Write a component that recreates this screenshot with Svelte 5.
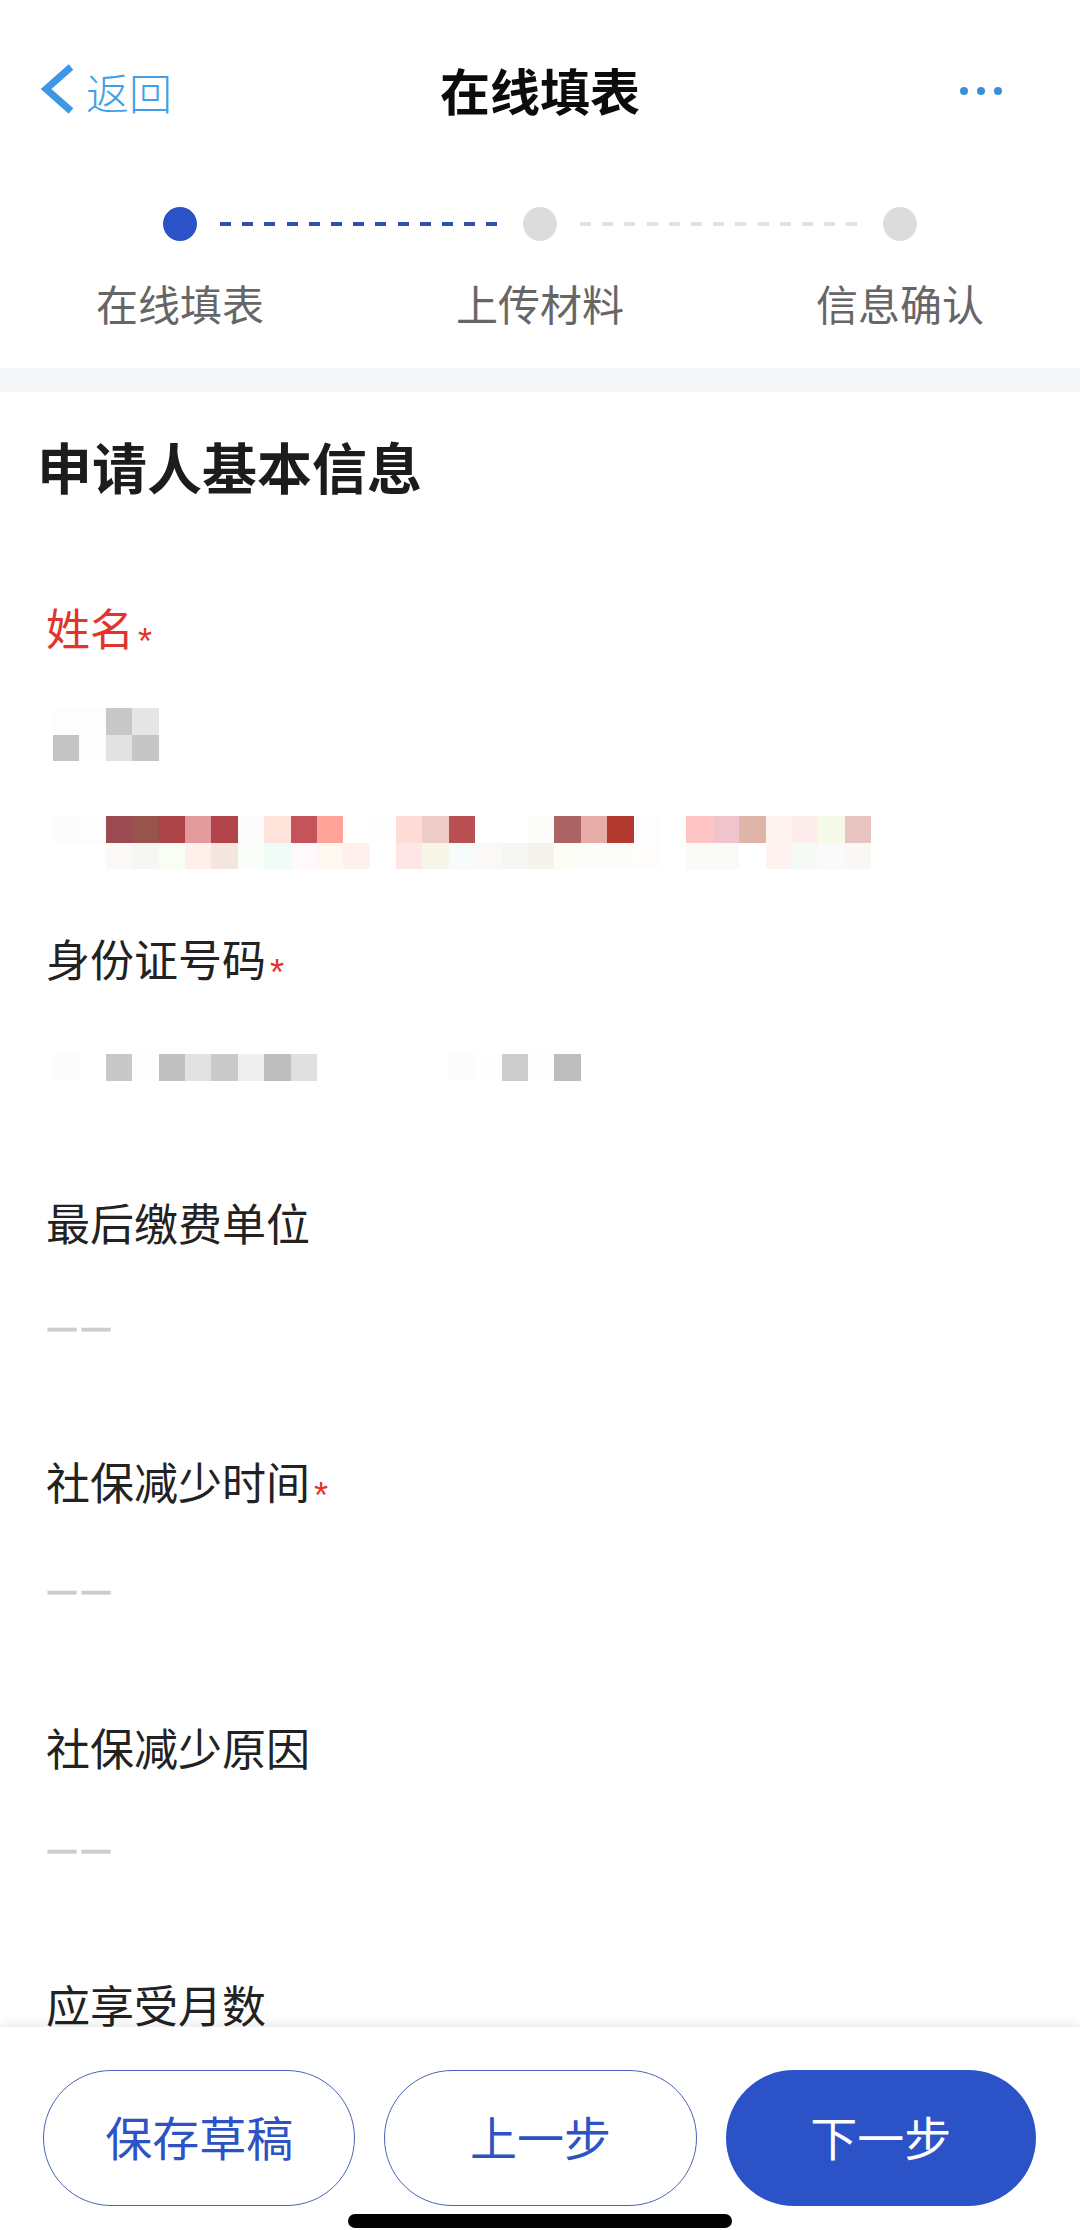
<script>
  const steps = [
    { label: "在线填表", active: true },
    { label: "上传材料", active: false },
    { label: "信息确认", active: false },
  ];

  const W = "#fff";
  const nameCells = [
    "#fdfdfd", "#fdfdfd", "#c8c8c8", "#e6e6e6",
    "#c4c4c4", "#fdfdfd", "#e2e2e2", "#c6c6c6",
  ];
  const addressCells = [
    "#fbfcfb", "#fdfdfd", "#9c4a52", "#98544c", "#ac4347", "#e29a9d", "#b24348", "#fbfbfb",
    "#ffe4dc", "#c4535a", "#ffa298", W, "#fdfefd", "#ffdcd8", "#eeccc8", "#b95054",
    W, W, "#fcfdfb", "#ab6363", "#e6aca8", "#b43a30", "#fcfdfc", W,
    "#ffc4c4", "#f0c4cc", "#e0b4a8", "#fff4f0", "#fcecec", "#f6fae8", "#e8c4c0",
    W, W, "#fcf8f6", "#f6f6f2", "#fafcf6", "#fff0ec", "#f4e6de", "#fafdf8",
    "#f0fcf8", "#fff8fc", "#fff8f0", "#fff2ee", W, "#ffe6e6", "#f8f6e8", "#f6fcfa",
    "#faf9f5", "#f6f6f4", "#f6f2ee", "#fdfdf8", "#fcfcf8", "#fcfcfa", "#fefdfc", W,
    "#fafbf6", "#fafbf6", W, "#fff2f0", "#f6faf4", "#fafafa", "#faf8f4",
  ];
  const idCells = [
    "#fcfcfc", W, "#c8c8c8", "#fdfdfd", "#c0c0c0", "#e2e2e2", "#cacaca", "#efefef",
    "#bebebe", "#e0e0e0", W, W, W, W, W, "#fcfcfc", "#fefefe", "#cccccc", "#fdfdfd", "#bebebe",
  ];

  const emptyFields = [
    { label: "最后缴费单位", required: false, height: 259, dashTop: 56 },
    { label: "社保减少时间", required: true, height: 266, dashTop: 60 },
    { label: "社保减少原因", required: false, height: 257, dashTop: 53 },
  ];
</script>

<div class="page">
  <div class="scroll">
    <header class="nav">
      <div class="back">
        <svg class="chevron" width="36" height="50" viewBox="0 0 36 50">
          <polyline points="33,3 8,25 33,47" fill="none" stroke="#3c97e6" stroke-width="7" />
        </svg>
        <span>返回</span>
      </div>
      <h1>在线填表</h1>
      <div class="more"><i></i><i></i><i></i></div>
    </header>

    <section class="steps">
      <div class="track">
        <span class="dot on"></span>
        <span class="line on"></span>
        <span class="dot"></span>
        <span class="line"></span>
        <span class="dot"></span>
      </div>
      <div class="labels">
        {#each steps as step}
          <span>{step.label}</span>
        {/each}
      </div>
    </section>

    <div class="band"></div>

    <main class="form">
      <h2>申请人基本信息</h2>

      <div class="field first">
        <div class="label error">姓名<em>*</em></div>
        <div class="mosaic name">
          {#each nameCells as c}<b style="background:{c}"></b>{/each}
        </div>
        <div class="mosaic address">
          {#each addressCells as c}<b style="background:{c}"></b>{/each}
        </div>
      </div>

      <div class="field idno">
        <div class="label">身份证号码<em>*</em></div>
        <div class="mosaic id">
          {#each idCells as c}<b style="background:{c}"></b>{/each}
        </div>
      </div>

      {#each emptyFields as f}
        <div class="field" style="height:{f.height}px">
          <div class="label">{f.label}{#if f.required}<em>*</em>{/if}</div>
          <div class="empty" style="margin-top:{f.dashTop}px">——</div>
        </div>
      {/each}

      <div class="field">
        <div class="label">应享受月数</div>
      </div>
    </main>
  </div>

  <footer class="bar">
    <button class="ghost">保存草稿</button>
    <button class="ghost">上一步</button>
    <button class="primary">下一步</button>
    <span class="home"></span>
  </footer>
</div>

<style>
  :global(body) {
    margin: 0;
    background: #fff;
    color: #1c1c1c;
    font-family: "Noto Sans CJK SC", "Noto Sans", sans-serif;
  }

  .page {
    display: flex;
    flex-direction: column;
    width: 1080px;
    height: 2230px;
    overflow: hidden;
  }

  .scroll {
    flex: 1;
    min-height: 0;
    overflow: hidden;
  }

  .nav {
    display: grid;
    grid-template-columns: 1fr auto 1fr;
    align-items: center;
    height: 184px;
    padding: 0 38px 6px;
    box-sizing: border-box;
  }

  .back {
    display: flex;
    align-items: center;
    gap: 12px;
    color: #449ee8;
    font-size: 43px;
    line-height: 50px;
    font-weight: 300;
  }

  .back span {
    margin-top: 3px;
  }

  .chevron {
    display: block;
  }

  h1 {
    margin: 0;
    color: #0c0c0c;
    font-size: 50px;
    line-height: 60px;
    font-weight: 700;
  }

  .more {
    display: flex;
    justify-content: flex-end;
    gap: 9px;
    margin: 4px 40px 0 0;
  }

  .more i {
    width: 8px;
    height: 8px;
    border-radius: 50%;
    background: #3a8fdc;
  }

  .steps {
    height: 184px;
  }

  .track {
    display: flex;
    align-items: center;
    gap: 23px;
    padding: 23px 0 0 163px;
  }

  .dot {
    flex: none;
    width: 34px;
    height: 34px;
    border-radius: 50%;
    background: #dcdcdc;
  }

  .dot.on {
    background: #2c52c8;
  }

  .line {
    flex: none;
    width: 280px;
    height: 4px;
    background: repeating-linear-gradient(90deg, #e2e2e2 0 11px, transparent 11px 22.2px);
  }

  .line.on {
    background: repeating-linear-gradient(90deg, #2f50b0 0 11px, transparent 11px 22.2px);
  }

  .labels {
    display: grid;
    grid-template-columns: repeat(3, 360px);
    margin-top: 37px;
    color: #666;
    font-size: 42px;
    line-height: 50px;
    font-weight: 400;
    text-align: center;
  }

  .band {
    height: 24px;
    background: #f5f6f8;
  }

  .form {
    padding: 35px 0 0 46px;
  }

  h2 {
    margin: 0 0 0 -9px;
    color: #1c1c1c;
    font-size: 55px;
    line-height: 76px;
    font-weight: 700;
  }

  .field.first {
    margin-top: 94px;
    height: 331px;
  }

  .field.idno {
    height: 264px;
  }

  .label {
    font-size: 44px;
    line-height: 60px;
    font-weight: 400;
    color: #222;
  }

  .label.error {
    color: #e0342c;
  }

  .label em {
    margin-left: 4px;
    color: #e0342c;
    font-family: "Liberation Sans", sans-serif;
    font-size: 36px;
    line-height: 0;
    font-style: normal;
    vertical-align: -8px;
  }

  .mosaic {
    display: grid;
    grid-template-columns: repeat(auto-fill, 26.4px);
    grid-auto-rows: 26.5px;
    margin-left: 7px;
  }

  .mosaic b {
    display: block;
  }

  .mosaic.name {
    width: 106px;
    margin-top: 51px;
  }

  .mosaic.address {
    width: 819px;
    margin-top: 55px;
  }

  .mosaic.id {
    width: 528px;
    margin-top: 66px;
  }

  .empty {
    margin-left: 2px;
    color: #cccccc;
    font-family: "Liberation Sans", sans-serif;
    font-size: 28px;
    line-height: 40px;
    font-weight: 700;
    letter-spacing: 6px;
    -webkit-text-stroke: 1px #cccccc;
  }

  .bar {
    position: relative;
    flex: none;
    display: flex;
    gap: 29px;
    height: 203px;
    padding: 43px 44px 0 43px;
    box-sizing: border-box;
    background: #fff;
    box-shadow: 0 -4px 10px rgba(0, 0, 0, 0.08);
  }

  button {
    flex: 1;
    height: 136px;
    padding: 0 0 6px;
    border-radius: 68px;
    font-family: inherit;
    font-size: 47px;
    font-weight: 400;
  }

  .ghost {
    border: 1.5px solid #4a62b8;
    background: #fff;
    color: #2d52c4;
  }

  .primary {
    border: 0;
    background: #2c52c8;
    color: #fff;
  }

  .home {
    position: absolute;
    left: 348px;
    bottom: 2px;
    width: 384px;
    height: 14px;
    border-radius: 7px;
    background: #000;
  }
</style>
